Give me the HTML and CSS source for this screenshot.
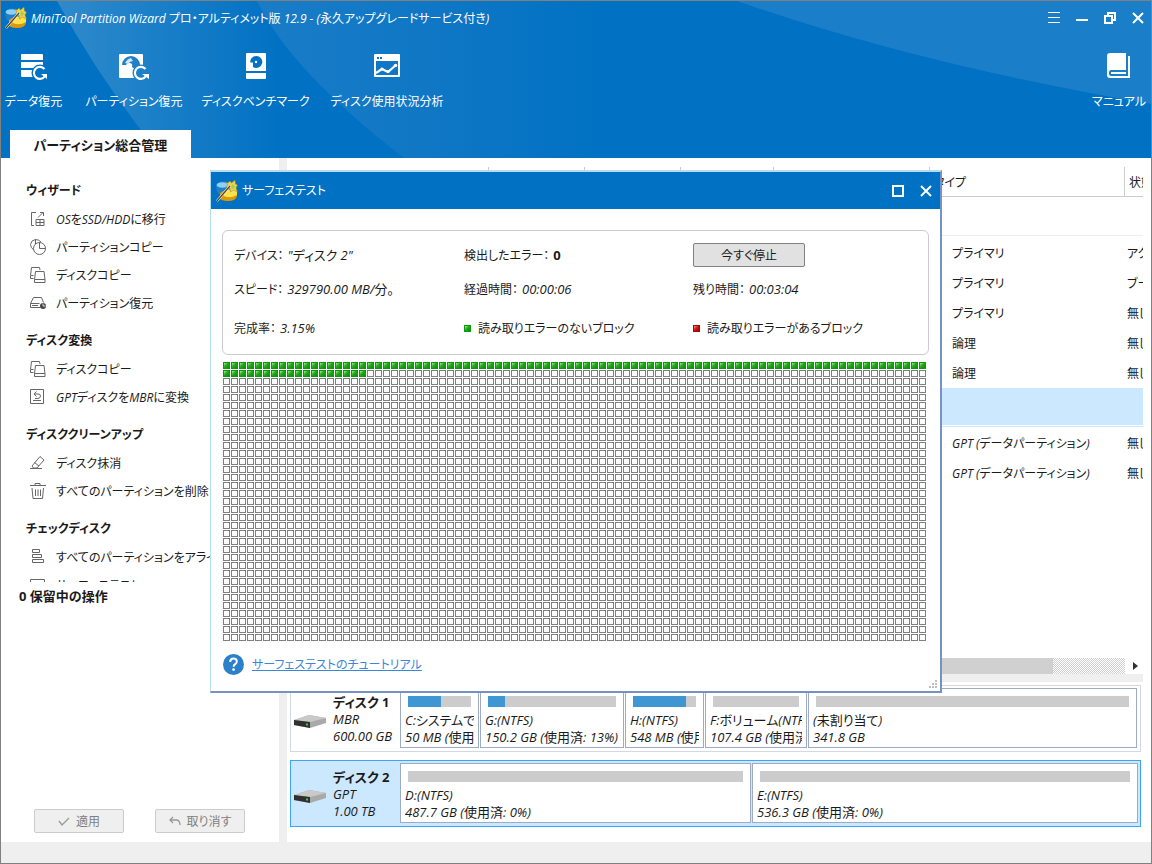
FILE: index.html
```
<!DOCTYPE html>
<html lang="ja">
<head>
  <meta charset="UTF-8" />
  <meta name="viewport" content="width=device-width, initial-scale=1.0"/>
  <title>MiniTool Partition Wizard</title>
  <link rel="stylesheet" href="styles.css">
</head>
<body>
  <!-- shared icons -->
  <svg class="sprite" xmlns="http://www.w3.org/2000/svg">
    <symbol id="logo" viewBox="0 0 22 22">
      <path d="M0 5q1-3.500 7-3.500T13 5v9H3Q0 12 0 5z" fill="#1f7fcb"/>
      <ellipse cx="6.500" cy="5" rx="5.800" ry="2.800" fill="#8fd0f2"/>
      <path d="M4 13l5-3h12v6q-1 5-9 5-7 0-8-3z" fill="#d99a08"/>
      <path d="M8 11q6-3 13-1v5q-7 4-13 1z" fill="#ffe14d"/>
      <path d="M10 2l2 1 2-2 1.500 2L19 0l.5 4 2 1-1.500 3 1.500 4-4-2-3 2-.5-4-4-1 2-2z" fill="#f4d24a" stroke="#8c8a2a" stroke-width=".5"/>
      <path d="M16 4l3 2-1 3-3-1z" fill="#a5cf5a"/>
      <path d="M1 21L14 6" stroke="#fff" stroke-width="2.400"/>
      <path d="M1 21L14 6" stroke="#55401a" stroke-width="1.300"/>
    </symbol>
    <symbol id="copy" viewBox="0 0 18 18">
      <path d="M4.500 12.500h-3v-3l1-8h8L11 4M2 9.500h2.500M6.500 5.500h8.500l1 8v3H5.500v-3zM5.500 13.500H16" fill="none" stroke="#666"/>
    </symbol>
    <symbol id="drive" viewBox="0 0 32 13">
      <path d="M0 5L15 0l17 3v5l-16 5L0 10z" fill="#a9a9a9"/>
      <path d="M0 5L15 0l17 3-16 4z" fill="#c9c9c9"/>
      <path d="M0 5l16 2v6L0 10z" fill="#30302e"/>
      <path d="M12 8.500h2v2h-2z" fill="#35d04a"/>
    </symbol>
  </svg>

  <div class="app">
    <header class="top">
      <svg class="top-bg" viewBox="0 0 1150 157" preserveAspectRatio="none">
        <defs>
          <linearGradient id="g1"><stop offset="0" stop-color="#2f8acb"/><stop offset=".65" stop-color="#0071c3"/></linearGradient>
          <linearGradient id="g2"><stop offset="0" stop-color="#1a7cc7"/><stop offset=".35" stop-color="#0f77c5"/><stop offset=".7" stop-color="#0071c3"/></linearGradient>
        </defs>
        <path d="M56 0Q92 66 139 128L160 157H403Q290 70 256 0z" fill="url(#g1)"/>
        <path d="M256 0Q290 70 403 157H760V0z" fill="url(#g2)"/>
        <path d="M736 0Q920 64 1150 103V0z" fill="#1b7ec9"/>
      </svg>

      <div class="titlebar">
        <svg class="logo"><use href="#logo"/></svg>
        <h1>MiniTool Partition Wizard プロ・アルティメット版 12.9 - (永久アップグレードサービス付き)</h1>
        <div class="window-buttons">
          <button aria-label="メニュー"><svg viewBox="0 0 12 12"><path d="M0 .5h12M0 5.500h12M0 10.500h12" stroke="#fff"/></svg></button>
          <button aria-label="最小化"><svg viewBox="0 0 12 12"><path d="M0 8h12" stroke="#fff" stroke-width="2"/></svg></button>
          <button aria-label="元に戻す"><svg viewBox="0 0 12 12"><path d="M4 3V1h7v7H8M1 4h7v7H1z" fill="none" stroke="#fff" stroke-width="2"/></svg></button>
          <button aria-label="閉じる"><svg viewBox="0 0 12 12"><path d="M1 1l10 10M11 1L1 11" stroke="#fff" stroke-width="2"/></svg></button>
        </div>
      </div>

      <nav class="toolbar">
        <button class="tool">
          <svg viewBox="0 0 28 28">
            <path d="M2 1h20q1 0 1 1v5H1V2q0-1 1-1zM1 9h22v6H1zM1 17h13v7H2q-1 0-1-1z" fill="#fff"/>
            <circle cx="20" cy="20" r="8.500" fill="#0071c3"/>
            <path d="M24.500 16A6 6 0 1 0 25 23" fill="none" stroke="#fff" stroke-width="2.200"/>
            <path d="M21 21h6v5z" fill="#fff"/>
          </svg>
          データ復元
        </button>
        <button class="tool">
          <svg viewBox="0 0 30 28">
            <path d="M1 1h22q1 0 1 1v23H1Q0 25 0 24V2Q0 1 1 1z" fill="#fff"/>
            <path d="M3 12a9 9 0 0 1 18 0l-4 5-4-3q1-4-3-4-2 0-3 2z" fill="#1e80c9"/>
            <path d="M6 10q2-4 6-5l2 3q-3 0-5 3z" fill="#cfe4f4"/>
            <circle cx="12" cy="12" r="1.200" fill="#fff"/>
            <circle cx="22" cy="20" r="8.500" fill="#1e80c9"/>
            <path d="M26.500 16A6 6 0 1 0 27 23" fill="none" stroke="#fff" stroke-width="2.200"/>
            <path d="M23 21h7v5z" fill="#fff"/>
          </svg>
          パーティション復元
        </button>
        <button class="tool">
          <svg viewBox="0 0 20 28">
            <path d="M1 0h18q1 0 1 1v17H0V1Q0 0 1 0zM0 20h20v5q0 1-1 1H1q-1 0-1-1z" fill="#fff"/>
            <path d="M10 3a6 6 0 1 1-3 11V9.500H4.200A6 6 0 0 1 10 3z" fill="#0071c3"/>
            <circle cx="10" cy="9" r="1.200" fill="#fff"/>
          </svg>
          ディスクベンチマーク
        </button>
        <button class="tool">
          <svg viewBox="0 0 26 28">
            <path d="M1 1h24q1 0 1 1v21q0 1-1 1H1q-1 0-1-1V2Q0 1 1 1z" fill="#fff"/>
            <path d="M2 8h22v14H2zM3 4h2v2H3zM6 4h2v2H6z" fill="#0f77c5"/>
            <path d="M2 20l6-4 6 3 8-7" fill="none" stroke="#fff" stroke-width="2.200"/>
            <circle cx="8" cy="16" r="1.600" fill="#fff"/><circle cx="14" cy="18.500" r="1.600" fill="#fff"/><circle cx="21.500" cy="12.500" r="1.800" fill="#fff"/>
          </svg>
          ディスク使用状況分析
        </button>
        <button class="tool manual">
          <svg viewBox="0 0 24 28">
            <path d="M3 0h16v17H4q-2 0-2 3 0 3 2 3h17V3h2v22H3q-3 0-3-3V3Q0 0 3 0z" fill="#fff"/>
            <path d="M4 19h15v2H4z" fill="#fff"/>
          </svg>
          マニュアル
        </button>
      </nav>

      <div class="tabs">
        <button class="tab">パーティション総合管理</button>
      </div>
    </header>

    <main class="main">
      <aside class="sidebar">
        <div class="side-list">
          <h2>ウィザード</h2>
          <a class="side-item" href="#">
            <svg viewBox="0 0 18 18"><path d="M7 2.500H2.500v13H5M7 15.500h8V9.500H7zM11 9.500v6M7 12.500h8M9 7.500l5-5M11 2.500h3.500V6" fill="none" stroke="#666"/></svg>
            OSをSSD/HDDに移行
          </a>
          <a class="side-item" href="#">
            <svg viewBox="0 0 18 18"><circle cx="10.500" cy="10.500" r="6" fill="none" stroke="#666"/><path d="M10.500 4.500v6h6M5 12Q1.500 10 1.500 6.500 2 2 6.500 1.500 10 1.500 12 4M6.500 1.500V6" fill="none" stroke="#666"/></svg>
            パーティションコピー
          </a>
          <a class="side-item" href="#"><svg><use href="#copy"/></svg>ディスクコピー</a>
          <a class="side-item" href="#">
            <svg viewBox="0 0 18 18"><path d="M1.500 13.500v-4l3-6h8l2 5M1.500 9.500h9M1.500 13.500h10M3 11.500h6" fill="none" stroke="#666"/><circle cx="14" cy="12" r="3" fill="#444"/><path d="M14 9.500V12h2.500" stroke="#ddd" fill="none"/></svg>
            パーティション復元
          </a>

          <h2>ディスク変換</h2>
          <a class="side-item" href="#"><svg><use href="#copy"/></svg>ディスクコピー</a>
          <a class="side-item" href="#">
            <svg viewBox="0 0 18 18"><path d="M1.500 1.500h13v14h-13zM4 12.500h8M5.500 6H9q2.500 0 2.500 2T9 10.500H6M7.500 3.500L5 6l2.500 2.500" fill="none" stroke="#666"/></svg>
            GPTディスクをMBRに変換
          </a>

          <h2>ディスククリーンアップ</h2>
          <a class="side-item" href="#">
            <svg viewBox="0 0 18 18"><path d="M11 2.500l4 3.500-7 8H4.500L3 12zM5.500 8.500L10 12M1 14.500h12" fill="none" stroke="#666"/></svg>
            ディスク抹消
          </a>
          <a class="side-item" href="#">
            <svg viewBox="0 0 18 18"><path d="M1 3.500h16M6 3V1.500h5V3M3 6l1 10.500h9.500L14.500 6M6.500 7.500V14M9 7.500V14M11.500 7.500V14" fill="none" stroke="#666"/></svg>
            すべてのパーティションを削除
          </a>

          <h2>チェックディスク</h2>
          <a class="side-item" href="#">
            <svg viewBox="0 0 18 18"><path d="M3.500 1.500h7v3h-7zM3.500 6.500h9v3h-9zM3.500 11.500h11v3h-11z" fill="none" stroke="#666"/></svg>
            すべてのパーティションをアライメント
          </a>
          <a class="side-item" href="#">
            <svg viewBox="0 0 18 18"><path d="M1.500 3.500h14v11h-14z" fill="none" stroke="#666"/></svg>
            サーフェステスト
          </a>
        </div>
        <div class="pending">0 保留中の操作</div>
        <div class="side-actions">
          <button disabled><svg viewBox="0 0 12 12"><path d="M1 6l3 4 7-7" fill="none" stroke="#999" stroke-width="1.300"/></svg>適用</button>
          <button disabled><svg viewBox="0 0 12 12"><path d="M4 2L1 5l3 3M1 5h6q4 0 4 5" fill="none" stroke="#999" stroke-width="1.300"/></svg>取り消す</button>
        </div>
      </aside>

      <section class="content">
        <div class="table-wrap">
          <table class="parts">
            <colgroup><col class="c-name"><col class="c-size"><col class="c-size"><col class="c-free"><col class="c-fs"><col class="c-type"><col></colgroup>
            <thead>
              <tr><th></th><th></th><th></th><th></th><th></th><th>タイプ</th><th>状態</th></tr>
            </thead>
            <tbody>
              <tr class="group"><td colspan="7"><div></div></td></tr>
              <tr><td colspan="5"></td><td>プライマリ</td><td>アクティブ</td></tr>
              <tr><td colspan="5"></td><td>プライマリ</td><td>ブート</td></tr>
              <tr><td colspan="5"></td><td>プライマリ</td><td>無し</td></tr>
              <tr><td colspan="5"></td><td>論理</td><td>無し</td></tr>
              <tr><td colspan="5"></td><td>論理</td><td>無し</td></tr>
              <tr class="group selected"><td colspan="7"><div></div></td></tr>
              <tr><td colspan="5"></td><td>GPT (データパーティション)</td><td>無し</td></tr>
              <tr><td colspan="5"></td><td>GPT (データパーティション)</td><td>無し</td></tr>
            </tbody>
          </table>
        </div>
        <div class="scrollbar">
          <div class="track"><div class="thumb"></div></div>
          <svg viewBox="0 0 18 16"><path d="M8 4v8l5-4z" fill="#333"/></svg>
        </div>
        <div class="splitter"></div>

        <div class="disks">
          <div class="disk">
            <div class="disk-info">
              <svg><use href="#drive"/></svg>
              <p><b>ディスク 1</b><br>MBR<br>600.00 GB</p>
            </div>
            <div class="part" style="flex-grow:69"><div class="bar"><i style="width:52%"></i></div>C:システムで予約済み<br>50 MB (使用済: 52%)</div>
            <div class="part" style="flex-grow:134"><div class="bar"><i style="width:13%"></i></div>G:(NTFS)<br>150.2 GB (使用済: 13%)</div>
            <div class="part" style="flex-grow:69"><div class="bar"><i style="width:84%"></i></div>H:(NTFS)<br>548 MB (使用済: 84%)</div>
            <div class="part" style="flex-grow:92"><div class="bar"></div>F:ボリューム(NTFS)<br>107.4 GB (使用済: 0%)</div>
            <div class="part" style="flex-grow:319"><div class="bar"></div>(未割り当て)<br>341.8 GB</div>
          </div>
          <div class="disk selected">
            <div class="disk-info">
              <svg><use href="#drive"/></svg>
              <p><b>ディスク 2</b><br>GPT<br>1.00 TB</p>
            </div>
            <div class="part" style="flex-grow:341"><div class="bar"></div>D:(NTFS)<br>487.7 GB (使用済: 0%)</div>
            <div class="part" style="flex-grow:376"><div class="bar"></div>E:(NTFS)<br>536.3 GB (使用済: 0%)</div>
          </div>
        </div>
      </section>
    </main>

    <footer class="statusbar"></footer>
  </div>

  <!-- surface test dialog -->
  <div class="dialog" role="dialog" aria-labelledby="dialog-title">
    <div class="dialog-title">
      <svg class="logo"><use href="#logo"/></svg>
      <h2 id="dialog-title">サーフェステスト</h2>
      <div class="window-buttons">
        <button aria-label="最大化"><svg viewBox="0 0 12 12"><path d="M1 1h10v10H1z" fill="none" stroke="#fff" stroke-width="2"/></svg></button>
        <button aria-label="閉じる"><svg viewBox="0 0 12 12"><path d="M1 1l10 10M11 1L1 11" stroke="#fff" stroke-width="2"/></svg></button>
      </div>
    </div>
    <div class="dialog-body">
      <div class="info">
        <div>デバイス：<span>"ディスク 2"</span></div>
        <div>検出したエラー：<b>0</b></div>
        <div><button class="stop">今すぐ停止</button></div>
        <div>スピード：<span>329790.00 MB/分。</span></div>
        <div>経過時間：<span>00:00:06</span></div>
        <div>残り時間：<span>00:03:04</span></div>
        <div>完成率：<span>3.15%</span></div>
        <div class="legend"><i class="ok"></i>読み取りエラーのないブロック</div>
        <div class="legend"><i class="bad"></i>読み取りエラーがあるブロック</div>
      </div>
      <div class="blocks" id="blocks"></div>
      <div class="help">
        <svg viewBox="0 0 21 21"><circle cx="10.500" cy="10.500" r="10.500" fill="#2b80c9"/><path d="M7.200 8q0-3.500 3.300-3.500T13.800 7.500q0 1.500-1.600 2.600-1.600 1-1.600 2.700" fill="none" stroke="#fff" stroke-width="2"/><circle cx="10.600" cy="15.600" r="1.400" fill="#fff"/></svg>
        <a href="#">サーフェステストのチュートリアル</a>
      </div>
    </div>
    <svg class="grip" viewBox="0 0 9 9"><path d="M6 0h2v2H6zM3 3h2v2H3zM6 3h2v2H6zM0 6h2v2H0zM3 6h2v2H3zM6 6h2v2H6z" fill="#bfbfbf"/></svg>
  </div>

  <script>
    const blocks = document.getElementById('blocks');
    const total = 88 * 35;
    const done = 106;

    for (let i = 0; i < total; i++) {
      const block = document.createElement('i');
      if (i < done) block.className = 'ok';
      blocks.appendChild(block);
    }
  </script>
</body>
</html>
```
FILE: styles.css
```
* {
  box-sizing: border-box;
}

body {
  margin: 0;
  background: #fff;
  color: #1a1a1a;
  font-family: "Open Sans", "Noto Sans CJK JP", sans-serif;
  font-size: 12px;
  font-style: italic;
  font-synthesis: none;
  font-feature-settings: "palt";
  line-height: 17px;
}

h1, h2, p {
  margin: 0;
  font-size: inherit;
}

button {
  font: inherit;
  font-feature-settings: inherit;
  color: inherit;
  background: none;
  border: none;
  padding: 0;
}

a {
  color: inherit;
  text-decoration: none;
}

b, h2 {
  font-style: normal;
}

.sprite {
  display: none;
}

.app {
  display: flex;
  flex-direction: column;
  height: 100vh;
  border: 1px solid #808080;
}

/* Header */
.top {
  position: relative;
  display: flex;
  flex-direction: column;
  height: 157px;
  background: #0071c3;
  color: #fff;
}

.top-bg {
  position: absolute;
  width: 100%;
  height: 100%;
}

.titlebar, .toolbar, .tabs {
  position: relative;
}

.titlebar {
  display: flex;
  align-items: center;
  height: 34px;
  padding: 0 7px 0 4px;
}

.logo {
  width: 22px;
  height: 22px;
  margin-right: 4px;
}

.titlebar h1 {
  flex: 1;
  font-weight: 400;
}

.window-buttons {
  display: flex;
  gap: 16px;
}

.window-buttons button, .window-buttons svg {
  display: block;
  width: 12px;
  height: 12px;
}

.toolbar {
  display: grid;
  flex: 1;
  grid-template-columns: 57px 94px 99px 114px 1fr;
  gap: 25px;
  padding: 18px 5px 0 4px;
}

.tool {
  display: flex;
  flex-direction: column;
  align-items: center;
  gap: 12px;
  height: 64px;
  white-space: nowrap;
}

.tool svg {
  height: 28px;
}

.manual {
  justify-self: end;
}

.tabs {
  padding-left: 9px;
}

.tab {
  display: block;
  width: 181px;
  height: 28px;
  padding-top: 2px;
  background: #fff;
  color: #1a1a1a;
  font-size: 13px;
  font-weight: 700;
}

.main {
  display: flex;
  flex: 1;
  min-height: 0;
}

/* Sidebar */
.sidebar {
  display: flex;
  flex-direction: column;
  width: 286px;
  border-right: 8px solid #efefef;
}

.side-list {
  height: 424px;
  padding-top: 9px;
  overflow: hidden;
}

.side-list h2 {
  height: 30px;
  margin-top: 8px;
  padding-left: 25px;
  line-height: 32px;
}

.side-item {
  display: flex;
  align-items: center;
  gap: 9px;
  height: 28px;
  padding-left: 28px;
  white-space: nowrap;
}

.side-item svg {
  flex: none;
  width: 18px;
  height: 18px;
}

.pending {
  padding: 6px 18px;
  font-size: 13px;
  font-weight: 700;
  font-style: normal;
}

.side-actions {
  display: flex;
  gap: 31px;
  margin-top: auto;
  padding: 0 33px 9px;
}

.side-actions button {
  display: flex;
  align-items: center;
  justify-content: center;
  gap: 6px;
  width: 90px;
  height: 24px;
  border: 1px solid #ccc;
  border-radius: 2px;
  background: #efefef;
  color: #808080;
}

.side-actions svg {
  width: 12px;
  height: 12px;
}

/* Partition table */
.content {
  display: flex;
  flex: 1;
  flex-direction: column;
  min-width: 0;
  padding: 9px 8px 0 3px;
}

.table-wrap {
  flex: 1;
  overflow: hidden;
}

.parts {
  width: 960px;
  table-layout: fixed;
  border-collapse: separate;
  border-spacing: 0;
}

.c-name {
  width: 199px;
}

.c-size {
  width: 96px;
}

.c-free {
  width: 93px;
}

.c-fs {
  width: 156px;
}

.c-type {
  width: 195px;
}

.parts th {
  height: 30px;
  padding: 2px 4px 0;
  border-right: 1px solid #ccc;
  border-bottom: 1px solid #ccc;
  font-weight: 400;
  text-align: left;
}

.parts td {
  height: 30px;
  padding: 0 0 0 22px;
}

.parts td:last-child {
  padding-left: 2px;
}

.parts .group td {
  height: 41px;
  padding: 0 0 2px;
}

.parts .selected td {
  height: 40px;
  padding-bottom: 1px;
}

.group div {
  height: 39px;
  border-bottom: 1px solid #eee;
}

.group.selected div {
  border-bottom: none;
  background: linear-gradient(#cce8ff 37px, #fff 37px, #fff 38px, #cce8ff 38px);
}

.scrollbar {
  display: flex;
  height: 16px;
}

.scrollbar svg {
  width: 18px;
  height: 16px;
}

.track {
  flex: 1;
  background: repeating-conic-gradient(#d0d0d0 0 25%, #fff 0 50%) 0 0 / 2px 2px;
}

.thumb {
  width: 92%;
  max-width: calc(100% - 72px);
  height: 100%;
  background: #d0d0d0;
}

.splitter {
  height: 8px;
  margin-left: -3px;
  background: #efefef;
}

/* Disk map */
.disks {
  display: flex;
  flex-direction: column;
  gap: 8px;
  padding: 3px 2px 15px 0;
  font-size: 13px;
}

.disk {
  display: flex;
  gap: 1px;
  height: 67px;
  padding: 2px 3px 3px 0;
  border: 1px solid #d3d7e2;
}

.disk.selected {
  padding-right: 2px;
  border-color: #3ea2f6;
  background: #cce8ff;
}

.disk-info {
  display: flex;
  gap: 7px;
  width: 108px;
  padding: 6px 0 0 3px;
  white-space: nowrap;
}

.disk-info svg {
  width: 32px;
  height: 13px;
  margin-top: 21px;
}

.part {
  flex: 1 1 0;
  min-width: 0;
  padding: 7px 4px 0;
  border: 1px solid #9dacc4;
  background: #fff;
  overflow: clip;
  overflow-clip-margin: content-box;
  white-space: nowrap;
}

.bar {
  height: 11px;
  margin: 0 3px 5px;
  background: #ccc;
}

.bar i {
  display: block;
  height: 100%;
  background: #3e97d3;
}

.statusbar {
  height: 21px;
  background: #efefef;
}

/* Dialog */
.dialog {
  position: absolute;
  top: 170px;
  left: 210px;
  width: 732px;
  border: 1px solid #b5dcf0;
  border-top-width: 2px;
  border-right: 2px solid #7592c2;
  border-bottom: 2px solid #7592c2;
  background: #fff;
}

.dialog-title {
  display: flex;
  align-items: center;
  height: 37px;
  padding: 0 8px 0 5px;
  background: #0071c3;
  color: #fff;
}

.dialog-title h2 {
  flex: 1;
  font-weight: 400;
}

.dialog-body {
  padding: 21px 11px 16px;
}

.info {
  display: grid;
  grid-template-columns: 230px 229px 1fr;
  grid-template-rows: 34px 34px 44px;
  align-items: center;
  height: 125px;
  padding: 7px 11px 0;
  border: 1px solid #ccc;
  border-radius: 6px;
}

.info span, .info b {
  margin-left: 4px;
  font-size: 13px;
}

.stop {
  display: block;
  width: 112px;
  height: 24px;
  border: 1px solid #808080;
  border-radius: 2px;
  background: #e1e1e1;
}

.legend {
  display: flex;
  align-items: center;
  gap: 7px;
}

.legend i, .blocks i {
  width: 7px;
  height: 7px;
}

.blocks {
  display: grid;
  grid-template-columns: repeat(auto-fill, 7px);
  grid-auto-rows: 7px;
  gap: 1px;
  margin-top: 7px;
  padding-left: 1px;
}

.blocks i {
  border: 1px solid #808080;
}

.blocks .ok, .legend .ok {
  border: 1px solid #0a9a0a;
  background: linear-gradient(135deg, #b5f08c, #22a91c 45%, #069006);
}

.legend .bad {
  border: 1px solid #a00a0a;
  background: linear-gradient(135deg, #ff9d8c, #d41515 45%, #a80000);
}

.help {
  display: flex;
  align-items: center;
  gap: 8px;
  margin-top: 13px;
  padding-left: 1px;
}

.help svg {
  width: 21px;
  height: 21px;
}

.help a {
  color: #3b86d8;
  text-decoration: underline;
}

.grip {
  position: absolute;
  right: 2px;
  bottom: 2px;
  width: 9px;
  height: 9px;
}
```
